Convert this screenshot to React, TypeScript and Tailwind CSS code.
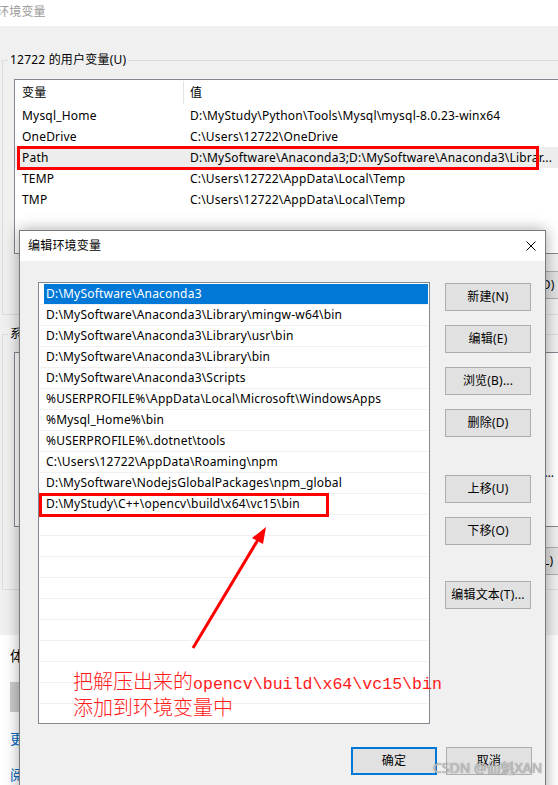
import { ReactNode } from 'react';

const UI_FONT = "font-['Noto_Sans','Noto_Sans_CJK_SC',sans-serif]";

const userVars = [
    { name: 'Mysql_Home', value: 'D:\\MyStudy\\Python\\Tools\\Mysql\\mysql-8.0.23-winx64' },
    { name: 'OneDrive', value: 'C:\\Users\\12722\\OneDrive' },
    { name: 'Path', value: 'D:\\MySoftware\\Anaconda3;D:\\MySoftware\\Anaconda3\\Librar...', active: true },
    { name: 'TEMP', value: 'C:\\Users\\12722\\AppData\\Local\\Temp' },
    { name: 'TMP', value: 'C:\\Users\\12722\\AppData\\Local\\Temp' },
];

const systemVars = [
    { name: 'ComSpec', value: 'C:\\Windows\\system32\\cmd.exe' },
    { name: 'DriverData', value: 'C:\\Windows\\System32\\Drivers\\DriverData' },
    { name: 'NUMBER_OF_PROCESSORS', value: '8' },
    { name: 'OS', value: 'Windows_NT' },
    { name: 'Path', value: 'C:\\Program Files (x86)\\Common Files\\Oracle\\Java\\javapath;C:\\Windows\\system32;C:\\Windows' },
    { name: 'PATHEXT', value: '.COM;.EXE;.BAT;.CMD;.VBS;.VBE;.JS;.JSE;.WSF;.WSH;.MSC' },
];

const pathEntries = [
    'D:\\MySoftware\\Anaconda3',
    'D:\\MySoftware\\Anaconda3\\Library\\mingw-w64\\bin',
    'D:\\MySoftware\\Anaconda3\\Library\\usr\\bin',
    'D:\\MySoftware\\Anaconda3\\Library\\bin',
    'D:\\MySoftware\\Anaconda3\\Scripts',
    '%USERPROFILE%\\AppData\\Local\\Microsoft\\WindowsApps',
    '%Mysql_Home%\\bin',
    '%USERPROFILE%\\.dotnet\\tools',
    'C:\\Users\\12722\\AppData\\Roaming\\npm',
    'D:\\MySoftware\\NodejsGlobalPackages\\npm_global',
    'D:\\MyStudy\\C++\\opencv\\build\\x64\\vc15\\bin',
];

function WinButton({ children, primary = false }: { children: ReactNode; primary?: boolean }) {
    return (
        <div
            className={
                'w-[86px] h-[28px] shrink-0 flex items-center justify-center bg-[#e1e1e1] text-[12px] text-black ' +
                (primary ? 'border-2 border-[#0078d7]' : 'border border-[#adadad]')
            }
        >
            {children}
        </div>
    );
}

function VarList({ rows }: { rows: { name: string; value: string; active?: boolean }[] }) {
    return (
        <div className="h-[175px] border border-[#828790] bg-white overflow-hidden">
            <div className="h-[25px] flex items-center">
                <div className="w-[169px] h-[23px] pl-[7px] flex items-center border-r border-[#e5e5e5]">变量</div>
                <div className="pl-[6px]">值</div>
            </div>
            {rows.map((r) => (
                <div key={r.name} className={'h-[21px] flex items-center whitespace-nowrap ' + (r.active ? 'bg-[#ededed]' : '')}>
                    <div className="w-[169px] pl-[7px]">{r.name}</div>
                    <div className="pl-[6px] w-[372px] truncate">{r.value}</div>
                </div>
            ))}
        </div>
    );
}

function EnvWindow() {
    return (
        <div className="w-[620px] h-[652px] ml-[-10px] bg-[#f0f0f0] flex flex-col">
            <div className="h-[26px] bg-white pl-[7px] pt-[4px] text-[12px] leading-[16px] text-[#9a9a9a]">环境变量</div>
            <fieldset className="mt-[26px] mx-[12px] border border-[#dcdcdc]">
                <legend className="ml-[5px] px-[2px] text-[12px] leading-[16px]">12722 的用户变量(U)</legend>
                <div className="pt-[11px] pl-[11px] pr-[20px] pb-[15px] flex flex-col">
                    <VarList rows={userVars} />
                    <div className="mt-[17px] flex justify-end gap-[8px]">
                        <WinButton>新建(N)...</WinButton>
                        <WinButton>编辑(E)...</WinButton>
                        <WinButton>删除(D)</WinButton>
                    </div>
                </div>
            </fieldset>
            <fieldset className="mt-[11px] mx-[12px] border border-[#dcdcdc]">
                <legend className="ml-[5px] px-[2px] text-[12px] leading-[16px]">系统变量(S)</legend>
                <div className="pt-[10px] pl-[11px] pr-[20px] pb-[14px] flex flex-col">
                    <VarList rows={systemVars} />
                    <div className="mt-[20px] flex justify-end gap-[8px]">
                        <WinButton>新建(W)...</WinButton>
                        <WinButton>编辑(I)...</WinButton>
                        <WinButton>删除(L)</WinButton>
                    </div>
                </div>
            </fieldset>
        </div>
    );
}

function SettingsBehind() {
    return (
        <div className="flex-1 bg-white pl-[10px] pt-[11px] flex flex-col text-[14px] whitespace-nowrap">
            <div className="leading-[20px]">体验 Windows Feature Experience Pack</div>
            <div className="mt-[16px] w-[60px] h-[30px] bg-[#cccccc]" />
            <div className="mt-[17px] leading-[20px] text-[#0067c0]">更改产品密钥或升级 Windows</div>
            <div className="mt-[16px] leading-[20px] text-[#0067c0]">阅读适用于我们服务的 Microsoft 服务协议</div>
        </div>
    );
}

function EditDialog() {
    return (
        <div className="absolute left-[19px] top-[230px] w-[527px] h-[600px] border border-[#7a7a7a] bg-[#f0f0f0] shadow-[0_0_14px_rgba(0,0,0,0.35)] flex flex-col">
            <div className="h-[30px] bg-white flex items-center justify-between pl-[8px] pr-[9px]">
                <span className="text-[12px]">编辑环境变量</span>
                <svg width="10" height="10" viewBox="0 0 10 10">
                    <path d="M0.5 0.5L9.5 9.5M9.5 0.5L0.5 9.5" stroke="#000" strokeWidth="1" />
                </svg>
            </div>
            <div className="pl-[18px] pt-[21px] flex gap-[15px]">
                <div className="w-[392px] h-[442px] border border-[#828790] bg-white pt-[1px] px-[1px] overflow-hidden">
                    {Array.from({ length: 21 }).map((_, i) => (
                        <div key={i} className="h-[21px] border-b border-[#f0f0f0] pl-[4px] flex">
                            <div className={'flex-1 pl-[2px] flex items-center whitespace-nowrap text-[12px] ' + (i === 0 ? 'bg-[#0078d7] text-white' : 'text-black')}>
                                {pathEntries[i] ?? ''}
                            </div>
                        </div>
                    ))}
                </div>
                <div className="mt-[1px] flex flex-col">
                    <WinButton>新建(N)</WinButton>
                    <div className="mt-[14px]"><WinButton>编辑(E)</WinButton></div>
                    <div className="mt-[14px]"><WinButton>浏览(B)...</WinButton></div>
                    <div className="mt-[14px]"><WinButton>删除(D)</WinButton></div>
                    <div className="mt-[38px]"><WinButton>上移(U)</WinButton></div>
                    <div className="mt-[14px]"><WinButton>下移(O)</WinButton></div>
                    <div className="mt-[36px]"><WinButton>编辑文本(T)...</WinButton></div>
                </div>
            </div>
            <div className="mt-[23px] pr-[13px] flex justify-end gap-[9px]">
                <WinButton primary>确定</WinButton>
                <WinButton>取消</WinButton>
            </div>
        </div>
    );
}

export default function App() {
    return (
        <div className={'relative w-[558px] h-[785px] overflow-hidden bg-white text-[12px] tracking-[0.2px] text-black ' + UI_FONT}>
            <div className="w-[558px] h-[785px] flex flex-col">
                <EnvWindow />
                <SettingsBehind />
            </div>

            {/* red marks */}
            <div className="absolute left-[17px] top-[146px] w-[522px] h-[24px] border-[3px] border-[#ff0000]" />

            <EditDialog />

            <div className="absolute left-[39px] top-[493px] w-[290px] h-[24px] border-[3px] border-[#ff0000]" />

            <svg className="absolute left-0 top-0 pointer-events-none" width="558" height="785">
                <line x1="193" y1="648" x2="259" y2="538" stroke="#ff0000" strokeWidth="3" />
                <polygon points="266,527 252,538 263,544" fill="#ff0000" />
            </svg>

            <div className="absolute left-[73px] top-[670px] text-[#ff1a1a] leading-[22px] tracking-normal whitespace-nowrap">
                <div>
                    <span className="text-[20px] font-light font-['Noto_Sans_CJK_SC',serif]">把解压出来的</span>
                    <span className="text-[16.6px] font-['Liberation_Mono',monospace]">opencv\build\x64\vc15\bin</span>
                </div>
                <div className="text-[20px] font-light font-['Noto_Sans_CJK_SC',serif]">添加到环境变量中</div>
            </div>

            <div className="absolute left-[433px] top-[759px] text-[14px] leading-[18px] tracking-normal text-[#c4c4c4] [text-shadow:0_0_1px_#666] whitespace-nowrap">
                CSDN @仙魁XAN
            </div>
        </div>
    );
}
